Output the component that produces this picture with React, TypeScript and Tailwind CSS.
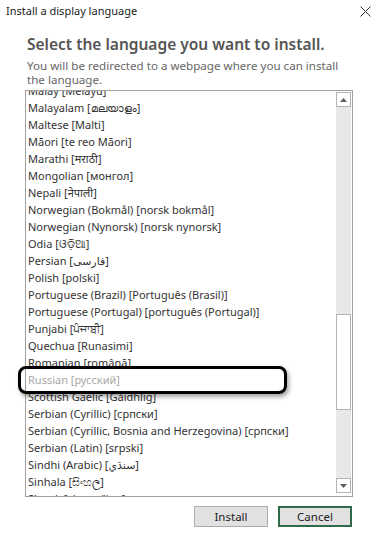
const languages = [
  'Malay [Melayu]',
  'Malayalam [മലയാളം]',
  'Maltese [Malti]',
  'Māori [te reo Māori]',
  'Marathi [मराठी]',
  'Mongolian [монгол]',
  'Nepali [नेपाली]',
  'Norwegian (Bokmål) [norsk bokmål]',
  'Norwegian (Nynorsk) [norsk nynorsk]',
  'Odia [ଓଡ଼ିଆ]',
  'Persian [فارسى]',
  'Polish [polski]',
  'Portuguese (Brazil) [Português (Brasil)]',
  'Portuguese (Portugal) [português (Portugal)]',
  'Punjabi [ਪੰਜਾਬੀ]',
  'Quechua [Runasimi]',
  'Romanian [română]',
  'Russian [русский]',
  'Scottish Gaelic [Gàidhlig]',
  'Serbian (Cyrillic) [српски]',
  'Serbian (Cyrillic, Bosnia and Herzegovina) [српски]',
  'Serbian (Latin) [srpski]',
  'Sindhi (Arabic) [سنڌي]',
  'Sinhala [සිංහල]',
  'Slovak [slovenčina]',
]

const disabled = 'Russian [русский]'

function Arrow({ up }: { up?: boolean }) {
  return (
    <div className="h-[15px] w-[15px] border border-[#b4b4b4] bg-white flex items-center justify-center">
      <svg width="7" height="4" viewBox="0 0 7 4">
        <path d={up ? 'M0 4 L3.5 0 L7 4 Z' : 'M0 0 L3.5 4 L7 0 Z'} fill="#606060" />
      </svg>
    </div>
  )
}

export default function App() {
  return (
    <div
      className="relative w-[376px] h-[536px] bg-white overflow-hidden text-[#333]"
      style={{ fontFamily: '"Noto Sans", "DejaVu Sans", sans-serif' }}
    >
      {/* title bar */}
      <div className="h-[22px] flex items-center justify-between pl-[6px] pr-[4px]">
        <span className="text-[11px] text-[#222]">Install a display language</span>
        <svg width="11" height="11" viewBox="0 0 11 11" className="mr-[1px]">
          <path d="M0.5 0.5 L10.5 10.5 M10.5 0.5 L0.5 10.5" stroke="#333" strokeWidth="1" />
        </svg>
      </div>

      <div className="pl-[27px] pr-[30px]">
        <h1 className="mt-[11px] text-[15.5px] leading-[22px] font-semibold text-[#555]">
          Select the language you want to install.
        </h1>
        <p className="mt-[4px] text-[11.6px] leading-[14px] text-[#666]">
          You will be redirected to a webpage where you can install the language.
        </p>
      </div>

      {/* list box */}
      <div className="ml-[25px] mt-[3px] w-[328px] h-[407px] border border-[#a0a0a0] flex overflow-hidden">
        <div className="flex-1 overflow-hidden pl-[2px]">
          <div className="-mt-[9px]">
            {languages.map((l) => (
              <div
                key={l}
                className={`h-[17px] leading-[17px] text-[11px] whitespace-nowrap ${
                  l === disabled ? 'text-[#a8a8a8]' : 'text-[#333]'
                }`}
              >
                {l}
              </div>
            ))}
          </div>
        </div>
        <div className="w-[15px] mr-[1px] mt-[1px] mb-[3px] flex flex-col bg-[#e8e8e8]">
          <Arrow up />
          <div className="h-[207px]" />
          <div className="h-[96px] border border-[#b4b4b4] bg-white" />
          <div className="flex-1" />
          <Arrow />
        </div>
      </div>

      {/* buttons */}
      <div className="mt-[9px] flex justify-end gap-[10px] pr-[24px]">
        <button className="w-[74px] h-[21px] border border-[#adadad] bg-[#e1e1e1] text-[11.5px] text-[#222]">
          Install
        </button>
        <button className="w-[74px] h-[21px] border-2 border-[#2f6b4a] bg-[#e1e1e1] text-[11.5px] text-[#222]">
          Cancel
        </button>
      </div>

      {/* annotation around Russian */}
      <div className="absolute left-[18px] top-[366px] w-[269px] h-[28px] border-[3px] border-black rounded-[8px] shadow-[2px_3px_4px_rgba(0,0,0,0.35)]" />
    </div>
  )
}
